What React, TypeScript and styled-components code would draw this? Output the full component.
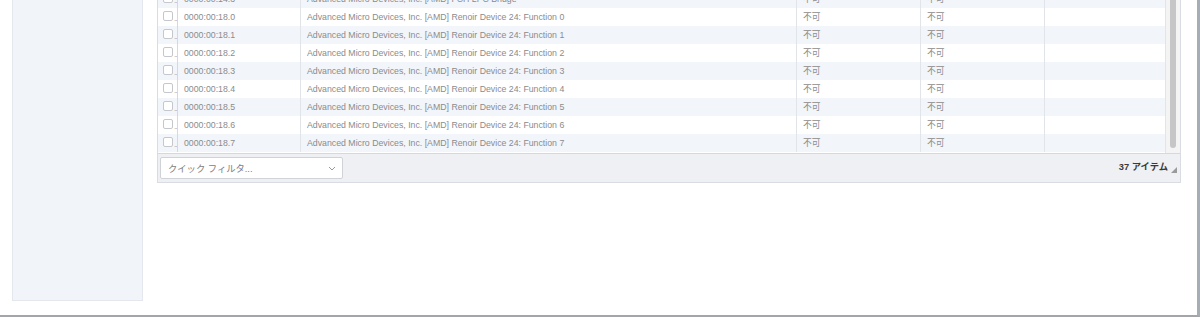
import React from "react";
import styled, { createGlobalStyle } from "styled-components";

const GlobalStyle = createGlobalStyle`
  html, body {
    margin: 0;
    padding: 0;
    background: #ffffff;
  }
  body {
    font-family: "Liberation Sans", Arial, "Noto Sans CJK JP", sans-serif;
  }
`;

const Page = styled.div`
  width: 1200px;
  height: 317px;
  box-sizing: border-box;
  display: flex;
  align-items: flex-start;
  border-bottom: 2px solid #a3a5a8;
  border-right: 3px solid #a7adb5;
  overflow: hidden;
`;

const Sidebar = styled.aside`
  width: 131px;
  height: 301px;
  margin-left: 12px;
  box-sizing: border-box;
  background: #f1f4f9;
  border: 1px solid #e4e8ee;
  border-top: none;
  flex-shrink: 0;
`;

const Main = styled.main`
  margin-left: 14px;
  width: 1024px;
  flex-shrink: 0;
`;

const Grid = styled.div`
  border: 1px solid #d9dde3;
  border-top: none;
  display: flex;
  flex-direction: column;
`;

const Viewport = styled.div`
  height: 153px;
  display: flex;
  overflow: hidden;
`;

const Rows = styled.div`
  flex: 1;
  margin-top: -10px;
`;

const Row = styled.div<{ $odd: boolean }>`
  display: grid;
  grid-template-columns: 20px 123px 496px 124px 124px 1fr;
  height: 18px;
  background: ${(p) => (p.$odd ? "#f2f5fa" : "#ffffff")};
`;

const Cell = styled.div`
  border-right: 1px solid #e1e4e9;
  padding-left: 6px;
  font-size: 8.75px;
  line-height: 19px;
  color: #8b8b8b;
  white-space: nowrap;
  overflow: hidden;
  &:last-child {
    border-right: none;
  }
`;

const CheckCell = styled.div`
  border-right: 1px solid #d5d9df;
  display: flex;
  align-items: center;
  padding-left: 5px;
  gap: 1px;
`;

const Check = styled.span`
  width: 10px;
  height: 10px;
  box-sizing: border-box;
  border: 1px solid #c4c7cb;
  border-radius: 2px;
  background: #fff;
  margin-top: -2px;
`;

const Dots = styled.span`
  font-size: 8px;
  color: #a0a0a0;
  align-self: flex-end;
  line-height: 14px;
  letter-spacing: -1px;
`;

const ScrollTrack = styled.div`
  width: 14px;
  display: flex;
  justify-content: center;
  background: #f4f4f4;
  border-left: 1px solid #e4e4e4;
`;

const ScrollThumb = styled.div`
  width: 6px;
  height: 148px;
  background: #c6c6c6;
  border-radius: 0 0 3px 3px;
`;

const Footer = styled.div`
  height: 28px;
  background: #eef0f3;
  border-top: 1px solid #d5d9df;
  display: flex;
  align-items: center;
  justify-content: space-between;
  padding: 0 2px;
`;

const FilterSelect = styled.div`
  width: 183px;
  height: 22px;
  box-sizing: border-box;
  background: #fff;
  border: 1px solid #cfd3d8;
  border-radius: 2px;
  display: flex;
  align-items: center;
  justify-content: space-between;
  padding: 0 6px 0 7px;
  font-size: 9.3px;
  color: #7d7d7d;
`;

const Count = styled.div`
  display: flex;
  align-items: center;
  gap: 3px;
  font-size: 9.3px;
  font-weight: bold;
  color: #3a3a3a;
  margin-top: -4px;
  margin-right: 1px;
`;

const Grip = styled.svg`
  margin-top: 8px;
`;

const rows = [
  { id: "0000:00:14.3", name: "Advanced Micro Devices, Inc. [AMD] FCH LPC Bridge" },
  ...Array.from({ length: 8 }, (_, i) => ({
    id: `0000:00:18.${i}`,
    name: `Advanced Micro Devices, Inc. [AMD] Renoir Device 24: Function ${i}`,
  })),
];

const App = () => (
  <>
    <GlobalStyle />
    <Page>
      <Sidebar />
      <Main>
        <Grid>
          <Viewport>
            <Rows>
              {rows.map((r, i) => (
                <Row key={r.id} $odd={i % 2 === 0}>
                  <CheckCell>
                    <Check />
                    <Dots>..</Dots>
                  </CheckCell>
                  <Cell>{r.id}</Cell>
                  <Cell>{r.name}</Cell>
                  <Cell>不可</Cell>
                  <Cell>不可</Cell>
                  <Cell />
                </Row>
              ))}
            </Rows>
            <ScrollTrack>
              <ScrollThumb />
            </ScrollTrack>
          </Viewport>
          <Footer>
            <FilterSelect>
              <span>クイック フィルタ...</span>
              <svg width="8" height="5" viewBox="0 0 8 5">
                <path d="M1 1l3 3 3-3" fill="none" stroke="#9a9a9a" strokeWidth="1" />
              </svg>
            </FilterSelect>
            <Count>
              <span>37 アイテム</span>
              <Grip width="6" height="6" viewBox="0 0 6 6">
                <path d="M6 0L6 6L0 6Z" fill="#9a9a9a" />
              </Grip>
            </Count>
          </Footer>
        </Grid>
      </Main>
    </Page>
  </>
);

export default App;
